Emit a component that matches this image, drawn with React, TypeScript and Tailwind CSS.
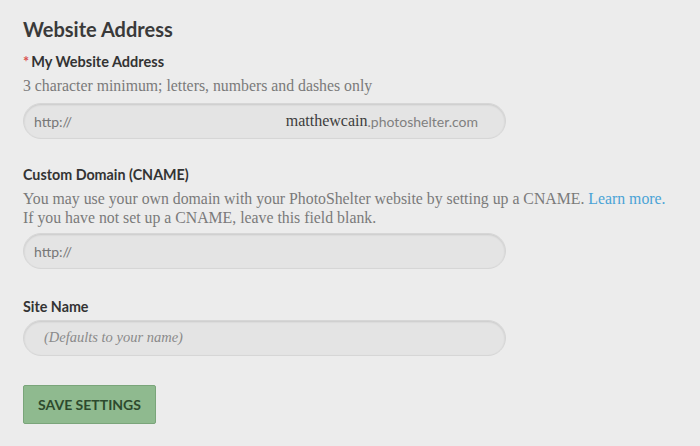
export default function App() {
  return (
    <div className="min-h-screen w-full bg-[#ececec] px-[23px] pt-[17px] font-['Lato','Noto_Sans',sans-serif]">
      <h2 className="text-[20px] font-bold leading-[24px] text-[#3a3a3a]">Website Address</h2>

      {/* My Website Address */}
      <div className="mt-[12px] flex items-center text-[14.5px] font-bold leading-[18px] text-[#333]">
        <span className="mr-[2px] text-[#d9534f]">*</span>
        My Website Address
      </div>
      <p className="mt-[6px] font-['Liberation_Serif',serif] text-[15.8px] leading-[18px] text-[#7a7a7a]">
        3 character minimum; letters, numbers and dashes only
      </p>
      <div className="mt-[8px] flex h-[36px] w-[483px] items-center rounded-full border border-[#d6d6d6] bg-[#e4e4e4] pl-[10px] pr-[27px] text-[14px] shadow-[inset_0_1px_2px_rgba(0,0,0,0.12)]">
        <span className="text-[#777]">http://</span>
        <span className="ml-auto font-['Liberation_Serif',serif] text-[16px] text-[#3d3d3d]">matthewcain</span>
        <span className="text-[#808080]">.photoshelter.com</span>
      </div>

      {/* Custom Domain */}
      <div className="mt-[27px] text-[14.3px] font-bold leading-[18px] text-[#333]">Custom Domain (CNAME)</div>
      <p className="mt-[5px] font-['Liberation_Serif',serif] text-[15.8px] leading-[19px] text-[#7a7a7a]">
        You may use your own domain with your PhotoShelter website by setting up a CNAME.{" "}
        <a href="#" className="text-[#4aa3d6]">Learn more.</a>
        <br />
        If you have not set up a CNAME, leave this field blank.
      </p>
      <div className="mt-[6px] flex h-[36px] w-[483px] items-center rounded-full border border-[#d6d6d6] bg-[#e4e4e4] pl-[10px] text-[14px] shadow-[inset_0_1px_2px_rgba(0,0,0,0.12)]">
        <span className="text-[#777]">http://</span>
      </div>

      {/* Site Name */}
      <div className="mt-[29px] text-[14.3px] font-bold leading-[18px] text-[#333]">Site Name</div>
      <div className="mt-[4px] flex h-[36px] w-[483px] items-center rounded-full border border-[#d6d6d6] bg-[#e4e4e4] pl-[20px] shadow-[inset_0_1px_2px_rgba(0,0,0,0.12)]">
        <span className="font-['Liberation_Serif',serif] text-[14.5px] italic text-[#8a8a8a]">(Defaults to your name)</span>
      </div>

      <button className="mt-[29px] h-[39px] w-[133px] rounded-[2px] border border-[#7aa57a] bg-[#8fba8f] text-[14px] font-bold text-[#2d4a2d]">
        SAVE SETTINGS
      </button>
    </div>
  );
}
